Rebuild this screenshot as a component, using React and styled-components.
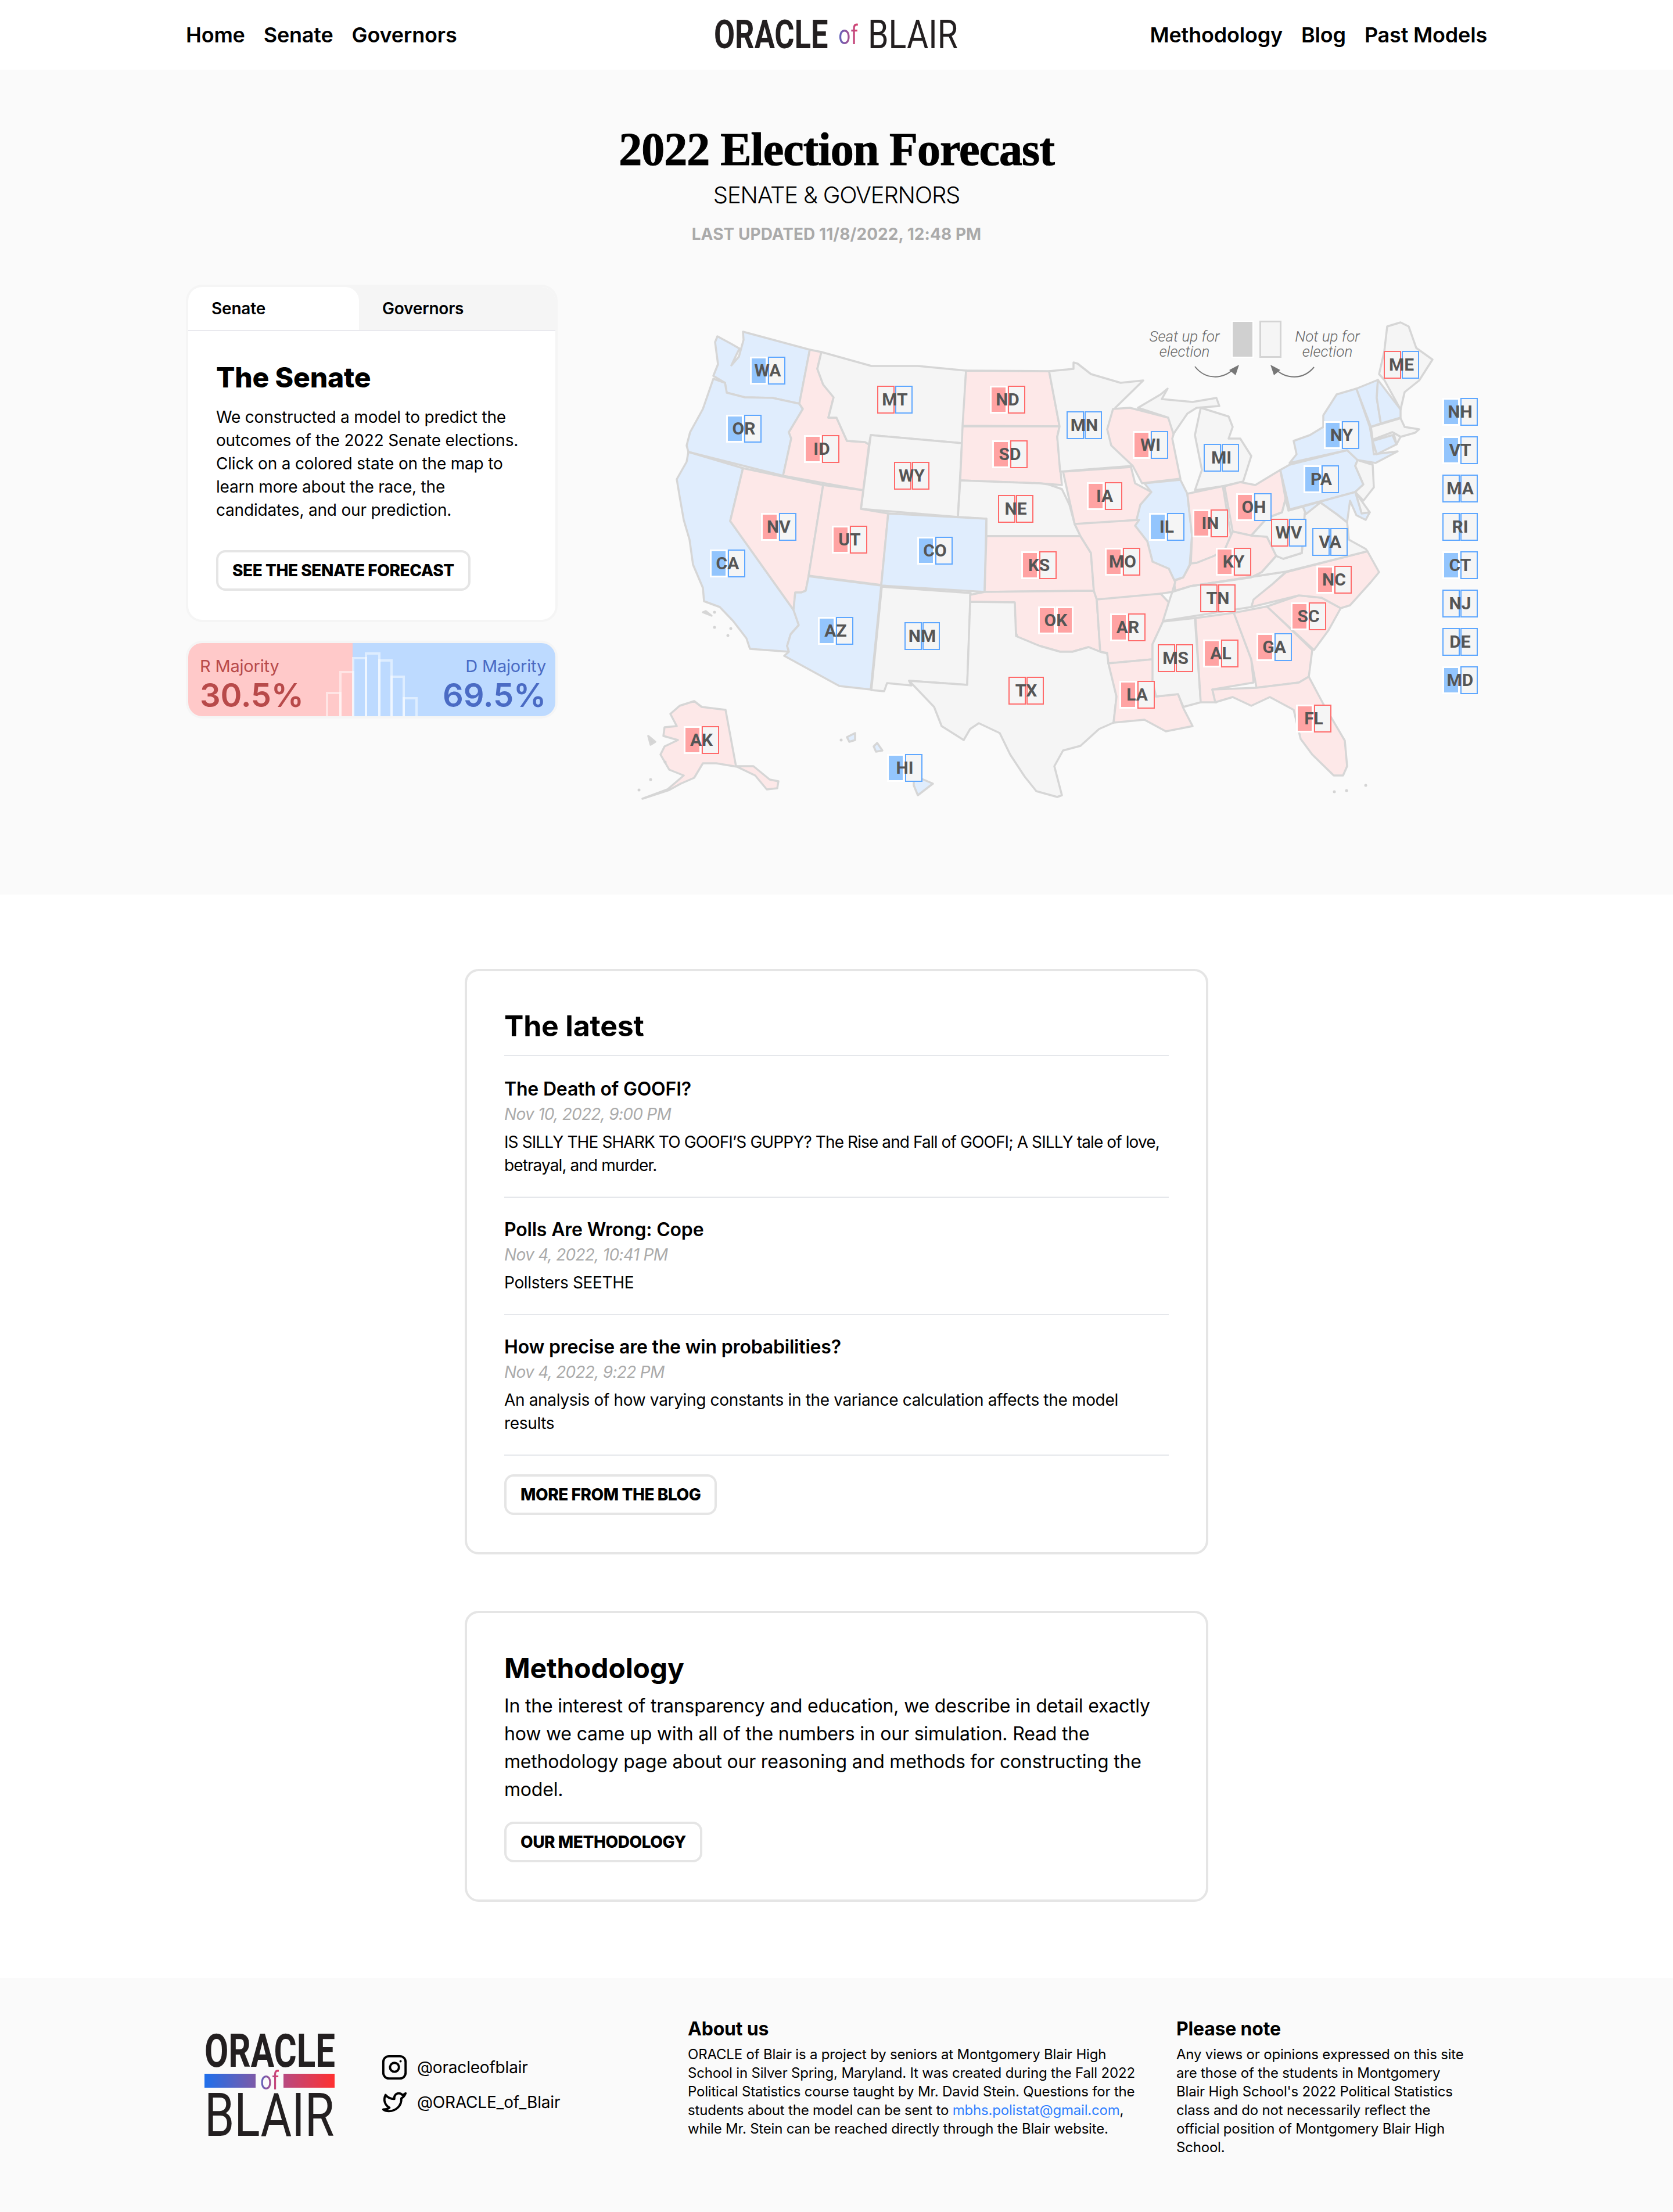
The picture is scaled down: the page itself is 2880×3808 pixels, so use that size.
import styled, { createGlobalStyle } from "styled-components";

const Global = createGlobalStyle`
  * { box-sizing: border-box; }
  body {
    margin: 0;
    background: #fff;
    color: #000;
    font-family: Inter, "Liberation Sans", sans-serif;
    letter-spacing: -0.012em;
  }
`;

const RED = "#fde8e8";
const BLUE = "#e0edfd";
const GRAY = "#f5f5f5";

const STATES = [
  [BLUE, "1279,569 1394,600 1376,693 1330,683 1282,682 1251,674 1248,657 1228,645 1236,625 1231,587 1235,577 1259,590 1273,598 1267,610 1259,627 1272,612 1280,583"],
  [BLUE, "1228,650 1248,657 1251,674 1282,682 1330,683 1376,693 1382,702 1374,720 1358,742 1362,753 1348,817 1185,776 1182,765 1188,742 1210,702"],
  [BLUE, "1185,776 1279,804 1257,895 1366,1048 1375,1074 1361,1090 1355,1110 1358,1120 1291,1115 1285,1097 1262,1067 1239,1043 1212,1033 1210,1010 1193,970 1187,927 1177,893 1170,853 1165,823 1182,793"],
  [RED, "1394,600 1414,604 1407,633 1417,660 1435,682 1426,717 1440,717 1458,757 1489,759 1496,763 1486,842 1348,817 1362,753 1358,742 1382,702 1376,693"],
  [GRAY, "1414,604 1500,628 1580,628 1663,636 1657,761 1499,747 1496,763 1489,759 1458,757 1440,717 1426,717 1435,682 1417,660 1407,633"],
  [GRAY, "1499,747 1656,761 1649,888 1482,874"],
  [RED, "1663,636 1806,637 1824,732 1657,731"],
  [RED, "1657,732 1824,732 1820,750 1828,833 1790,830 1653,825"],
  [GRAY, "1653,825 1790,830 1805,832 1828,840 1841,867 1850,900 1860,921 1698,921 1698,891 1649,888"],
  [RED, "1279,804 1417,833 1392,990 1387,1015 1379,1018 1369,1018 1366,1048 1257,895"],
  [RED, "1417,833 1486,842 1482,874 1529,882 1517,1005 1392,989"],
  [BLUE, "1529,882 1698,891 1695,1017 1517,1006"],
  [BLUE, "1392,990 1517,1006 1499,1185 1445,1179 1350,1127 1358,1120 1355,1110 1361,1090 1375,1074 1366,1048 1369,1018 1379,1018 1387,1015"],
  [GRAY, "1518,1008 1671,1019 1665,1177 1565,1170 1569,1178 1527,1174 1522,1188 1500,1186"],
  [RED, "1698,921 1860,921 1878,950 1883,1015 1695,1017"],
  [RED, "1670,1022 1695,1017 1883,1015 1888,1030 1894,1120 1874,1112 1846,1120 1825,1120 1790,1110 1754,1100 1749,1088 1746,1035 1670,1034"],
  [GRAY, "1670,1034 1747,1035 1749,1093 1790,1110 1825,1120 1846,1120 1874,1112 1894,1120 1906,1123 1909,1140 1922,1197 1917,1242 1892,1253 1860,1282 1830,1290 1815,1317 1828,1367 1820,1370 1784,1360 1764,1335 1739,1297 1721,1260 1685,1243 1670,1253 1659,1272 1621,1248 1608,1215 1565,1170 1665,1177"],
  [GRAY, "1806,637 1848,633 1848,622 1855,624 1878,642 1929,657 1968,653 1920,700 1916,717 1908,737 1913,763 1947,787 1950,800 1860,807 1825,810 1820,750 1824,732"],
  [RED, "1916,702 1945,700 2011,717 2023,737 2018,753 2032,822 1966,830 1950,800 1913,765 1906,737"],
  [GRAY, "1959,700 1998,677 2010,667 2000,685 2053,690 2094,683 2099,697 2060,700 2044,710 2020,745 2011,717"],
  [GRAY, "2067,700 2115,715 2122,733 2115,753 2135,753 2154,783 2140,827 2105,835 2057,842 2069,807 2057,747"],
  [RED, "1830,810 1860,808 1947,802 1954,830 1982,845 1972,867 1961,893 1860,900 1850,900"],
  [BLUE, "1970,830 2032,824 2044,848 2052,920 2048,970 2037,992 2021,997 2012,977 1984,965 1975,930 1954,903 1963,867 1982,845"],
  [RED, "2044,848 2105,835 2119,920 2108,945 2090,955 2060,967 2050,968 2052,920"],
  [RED, "2108,835 2135,828 2161,833 2204,807 2213,857 2207,880 2181,890 2154,920 2122,913"],
  [RED, "2050,968 2060,967 2090,955 2108,945 2122,913 2154,920 2181,922 2197,955 2172,983 2154,992 2050,1007 2023,1015 2021,998 2037,992"],
  [RED, "1850,900 1961,893 1954,903 1975,930 1984,965 2012,977 2023,1000 2018,1017 1998,1020 2000,1035 1888,1030 1883,1015 1878,950 1860,921"],
  [RED, "1888,1030 1998,1020 2012,1035 2005,1063 1984,1107 1984,1133 1908,1140 1906,1122 1894,1120"],
  [RED, "1908,1140 1984,1133 1988,1150 1984,1170 1990,1197 2028,1193 2037,1217 2053,1248 2007,1257 1970,1237 1917,1242 1922,1197"],
  [GRAY, "2002,1068 2057,1062 2067,1207 2037,1215 2028,1193 1990,1197 1984,1170 1984,1107"],
  [RED, "2058,1062 2124,1053 2154,1133 2158,1173 2087,1185 2094,1207 2076,1207 2067,1207"],
  [RED, "2124,1053 2181,1042 2197,1057 2259,1117 2253,1163 2236,1173 2163,1182 2154,1133"],
  [RED, "2087,1185 2163,1182 2236,1173 2253,1163 2278,1210 2315,1273 2319,1317 2312,1333 2296,1333 2259,1297 2239,1270 2227,1220 2186,1198 2154,1213 2122,1198 2092,1207"],
  [RED, "2181,1042 2236,1023 2275,1027 2308,1045 2287,1083 2262,1117 2197,1057"],
  [RED, "2214,983 2354,947 2374,983 2360,1000 2324,1040 2308,1045 2275,1027 2236,1023 2154,1043 2158,1028 2191,1003"],
  [GRAY, "2018,1017 2050,1007 2214,982 2191,1003 2158,1030 2154,1043 2002,1067 2012,1035"],
  [GRAY, "2154,992 2172,983 2197,955 2209,960 2241,950 2246,882 2273,863 2301,883 2319,897 2322,927 2351,943 2354,947 2214,982 2050,1007"],
  [GRAY, "2213,857 2218,877 2243,870 2248,883 2273,863 2246,882 2241,950 2209,960 2197,955 2181,922 2154,920 2181,890 2207,880"],
  [BLUE, "2204,807 2220,798 2319,773 2337,790 2333,800 2347,832 2333,845 2220,875"],
  [BLUE, "2220,795 2232,780 2227,757 2255,747 2278,733 2278,713 2301,677 2335,667 2358,733 2362,755 2365,780 2406,775 2368,795 2337,790 2319,773"],
  [BLUE, "2335,667 2372,652 2370,683 2377,727 2360,733"],
  [BLUE, "2372,652 2411,703 2411,717 2377,727 2370,683"],
  [GRAY, "2374,642 2383,603 2388,560 2411,553 2425,560 2438,597 2466,617 2443,653 2418,673 2411,703 2383,652"],
  [GRAY, "2360,733 2411,718 2418,733 2443,737 2436,743 2411,750 2397,742 2363,755"],
  [BLUE, "2363,757 2397,747 2404,763 2370,780"],
  [GRAY, "2399,743 2411,750 2404,763"],
  [GRAY, "2337,790 2363,798 2365,837 2347,860 2333,845 2347,832 2333,800"],
  [GRAY, "2333,845 2358,880 2344,882"],
  [BLUE, "2243,870 2333,845 2344,882 2358,880 2351,893 2335,885 2324,860 2319,897 2301,883 2273,863 2248,883"],
  [RED, "1195,1205 1208,1215 1249,1220 1267,1317 1297,1317 1325,1340 1340,1343 1338,1355 1320,1357 1300,1333 1269,1318 1233,1312 1210,1312 1195,1337 1172,1347 1152,1358 1106,1373 1149,1357 1177,1333 1152,1323 1137,1297 1144,1283 1167,1272 1142,1265 1144,1250 1165,1248 1154,1227 1170,1213"],
  [BLUE, "1573,1333 1606,1347 1580,1367 1573,1350"],
  [BLUE, "1504,1283 1510,1277 1519,1290 1508,1292"],
  [BLUE, "1458,1267 1472,1260 1472,1272 1462,1275"],
  ["#d4d4d4", "1215,1050 1225,1058 1210,1052"],
  ["#d4d4d4", "1116,1265 1128,1275 1120,1280"],
];

const DOTS = [
  [1230, 1052], [1230, 1078], [1258, 1080], [1253, 1092], [2297, 1361], [2318, 1359], [2351, 1350],
  [1100, 1358], [1120, 1340], [1145, 1310], [1448, 1272],
];

const R = "#ff6b6b";
const B = "#5ea7ff";
const RF = "#ffa3a3";
const BF = "#93c5fd";

// x, y, label, left tile, right tile (a fill colour means a seat up for election)
const rf = ["r", true];
const ro = ["r", false];
const bf = ["b", true];
const bo = ["b", false];
const PINS = [
  [1291, 612, "WA", bf, bo], [1250, 712, "OR", bf, bo], [1510, 662, "MT", ro, bo], [1704, 662, "ND", rf, ro],
  [1384, 747, "ID", rf, ro], [1708, 756, "SD", rf, ro], [1539, 793, "WY", ro, ro], [1718, 850, "NE", ro, ro],
  [1310, 881, "NV", rf, bo], [1432, 903, "UT", rf, ro], [1579, 922, "CO", bf, bo], [1758, 947, "KS", rf, ro],
  [1222, 944, "CA", bf, bo], [1787, 1042, "OK", rf, rf], [1408, 1060, "AZ", bf, bo], [1557, 1069, "NM", bo, bo],
  [1736, 1163, "TX", ro, ro], [1177, 1248, "AK", rf, ro], [1527, 1296, "HI", bf, bo], [2382, 602, "ME", ro, bo],
  [2483, 683, "NH", bf, bo], [2483, 749, "VT", bf, bo], [2483, 815, "MA", bo, bo], [2483, 881, "RI", bo, bo],
  [2483, 947, "CT", bf, bo], [2483, 1013, "NJ", bo, bo], [2483, 1079, "DE", bo, bo], [2483, 1145, "MD", bf, bo],
  [1836, 706, "MN", bo, bo], [1950, 740, "WI", rf, bo], [2279, 723, "NY", bf, bo], [2072, 762, "MI", bo, bo],
  [2244, 799, "PA", bf, bo], [1871, 828, "IA", rf, ro], [2128, 847, "OH", rf, bo], [1978, 881, "IL", bf, bo],
  [2053, 875, "IN", rf, ro], [2188, 891, "WV", ro, bo], [2259, 907, "VA", bo, bo], [1902, 941, "MO", rf, ro],
  [2093, 941, "KY", rf, ro], [2266, 972, "NC", rf, ro], [2066, 1004, "TN", ro, ro], [2222, 1035, "SC", rf, ro],
  [1911, 1054, "AR", rf, ro], [2163, 1088, "GA", rf, bo], [2071, 1099, "AL", rf, ro], [1993, 1107, "MS", ro, ro],
  [1927, 1170, "LA", rf, ro], [2231, 1211, "FL", rf, ro],
];

const POSTS = [
  {
    title: "The Death of GOOFI?",
    date: "Nov 10, 2022, 9:00 PM",
    text: "IS SILLY THE SHARK TO GOOFI’S GUPPY? The Rise and Fall of GOOFI; A SILLY tale of love, betrayal, and murder.",
    tight: true,
  },
  { title: "Polls Are Wrong: Cope", date: "Nov 4, 2022, 10:41 PM", text: "Pollsters SEETHE" },
  {
    title: "How precise are the win probabilities?",
    date: "Nov 4, 2022, 9:22 PM",
    text: "An analysis of how varying constants in the variance calculation affects the model results",
  },
];

const HIST = [[563, 1192], [586, 1156], [608, 1132], [630, 1124], [653, 1136], [674, 1164], [695, 1201]];
const HIST_W = [23, 22, 22, 23, 21, 21, 22];

function Tile({ side }) {
  const [party, up] = side;
  return <TileBox $up={up} $color={party === "r" ? (up ? RF : R) : up ? BF : B} />;
}

function Pin({ x, y, label, left, right }) {
  return (
    <PinBox style={{ left: x - 1060, top: y - 520 }}>
      <Tile side={left} />
      <Tile side={right} />
      <PinLabel>{label}</PinLabel>
    </PinBox>
  );
}

function USMap() {
  return (
    <MapCanvas>
      <MapSvg viewBox="1060 520 1500 880">
        {STATES.map(([fill, points], i) => (
          <polygon key={i} points={points} fill={fill} stroke="#d6d6d6" strokeWidth="3.5" strokeLinejoin="round" />
        ))}
        {DOTS.map(([cx, cy], i) => (
          <circle key={i} cx={cx} cy={cy} r="2.5" fill="#d4d4d4" />
        ))}
        <path d="M2057 629 C2075 652 2105 652 2125 632" fill="none" stroke="#777" strokeWidth="2" />
        <path d="M2133 626 L2116 635 L2127 644 Z" fill="#777" />
        <path d="M2262 630 C2244 652 2214 652 2194 632" fill="none" stroke="#777" strokeWidth="2" />
        <path d="M2187 626 L2204 635 L2193 644 Z" fill="#777" />
      </MapSvg>
      <LegendText $center={2039}>Seat up for<br />election</LegendText>
      <LegendText $center={2285}>Not up for<br />election</LegendText>
      <LegendFilled />
      <LegendEmpty />
      {PINS.map(([x, y, label, left, right]) => (
        <Pin key={label} x={x} y={y} label={label} left={left} right={right} />
      ))}
    </MapCanvas>
  );
}

function Histogram() {
  return (
    <HistSvg viewBox="324 1106 632 126">
      {HIST.map(([x, y], i) => (
        <rect key={x} x={x} y={y} width={HIST_W[i]} height={1240 - y} fill="none" stroke="rgba(255,255,255,0.5)" strokeWidth="4" />
      ))}
    </HistSvg>
  );
}

function App() {
  return (
    <>
      <Global />
      <Nav>
        <NavLinks>
          <NavLink>Home</NavLink>
          <NavLink>Senate</NavLink>
          <NavLink>Governors</NavLink>
        </NavLinks>
        <NavLogo>
          <LogoWord $size={68} $weight={700} $width={198} $scale={0.77}>ORACLE</LogoWord>
          <LogoOf $size={46}>of</LogoOf>
          <LogoWord $size={68} $weight={400} $width={157} $scale={0.84}>BLAIR</LogoWord>
        </NavLogo>
        <NavLinks>
          <NavLink>Methodology</NavLink>
          <NavLink>Blog</NavLink>
          <NavLink>Past Models</NavLink>
        </NavLinks>
      </Nav>

      <Hero>
        <Title>2022 Election Forecast</Title>
        <Subtitle>SENATE &amp; GOVERNORS</Subtitle>
        <Updated>LAST UPDATED 11/8/2022, 12:48 PM</Updated>
        <HeroBody>
          <SideColumn>
            <TabCard>
              <Tabs>
                <Tab $active>Senate</Tab>
                <Tab>Governors</Tab>
              </Tabs>
              <TabBody>
                <TabHeading>The Senate</TabHeading>
                <TabText>
                  We constructed a model to predict the outcomes of the 2022 Senate elections. Click on a colored state
                  on the map to learn more about the race, the candidates, and our prediction.
                </TabText>
                <Button>SEE THE SENATE FORECAST</Button>
              </TabBody>
            </TabCard>
            <MajorityBar>
              <MajoritySide $bg="#ffc9c9" $color="#b84a4a" $width={283}>
                <MajorityLabel>R Majority</MajorityLabel>
                <MajorityValue>30.5%</MajorityValue>
              </MajoritySide>
              <MajoritySide $bg="#bddaff" $color="#4a6bc4" $right>
                <MajorityLabel>D Majority</MajorityLabel>
                <MajorityValue>69.5%</MajorityValue>
              </MajoritySide>
              <Histogram />
            </MajorityBar>
          </SideColumn>
          <USMap />
        </HeroBody>
      </Hero>

      <Main>
        <Card>
          <CardTitle>The latest</CardTitle>
          {POSTS.map((post) => (
            <Post key={post.title}>
              <PostTitle>{post.title}</PostTitle>
              <PostDate>{post.date}</PostDate>
              <PostText $tight={post.tight}>{post.text}</PostText>
            </Post>
          ))}
          <Button>MORE FROM THE BLOG</Button>
        </Card>
        <Card $method>
          <MethodTitle>Methodology</MethodTitle>
          <MethodText>
            In the interest of transparency and education, we describe in detail exactly how we came up with all of the
            numbers in our simulation. Read the methodology page about our reasoning and methods for constructing the
            model.
          </MethodText>
          <Button>OUR METHODOLOGY</Button>
        </Card>
      </Main>

      <Footer>
        <FooterLogo>
          <LogoWord $size={80} $lead={56} $weight={700} $width={223} $scale={0.75}>ORACLE</LogoWord>
          <LogoBars>
            <LogoBar $from="#1f6feb" $to="#7c5aa8" />
            <LogoOf $size={44}>of</LogoOf>
            <LogoBar $from="#b84a80" $to="#ff3030" />
          </LogoBars>
          <LogoWord $size={103} $lead={73} $weight={400} $width={223} $scale={0.8}>BLAIR</LogoWord>
        </FooterLogo>
        <Socials>
          <Social>
            <SocialIcon viewBox="0 0 24 24">
              <rect x="2" y="2" width="20" height="20" rx="5" ry="5" />
              <path d="M16 11.37A4 4 0 1 1 12.63 8 4 4 0 0 1 16 11.37z" />
              <line x1="17.5" y1="6.5" x2="17.51" y2="6.5" />
            </SocialIcon>
            @oracleofblair
          </Social>
          <Social>
            <SocialIcon viewBox="0 0 24 24">
              <path d="M22 4s-1 2.9-3.8 4.6C18.5 15 13.6 20 7 20c-1.9 0-3.7-.5-5-1.5 2 .1 4-.5 5.5-1.6C3 14.5 2 9.5 4 5.5c2 2.4 4.8 3.6 7.9 3.5-.4-2.6 1.3-5 4.1-5 1.2 0 2.3.6 3 1.4C20 5.5 22 4 22 4z" />
            </SocialIcon>
            @ORACLE_of_Blair
          </Social>
        </Socials>
        <FooterColumn $width={841}>
          <FooterHeading>About us</FooterHeading>
          <FooterText>
            ORACLE of Blair is a project by seniors at Montgomery Blair High School in Silver Spring, Maryland. It was
            created during the Fall 2022 Political Statistics course taught by Mr. David Stein. Questions for the
            students about the model can be sent to <MailLink>mbhs.polistat@gmail.com</MailLink>, while Mr. Stein can be
            reached directly through the Blair website.
          </FooterText>
        </FooterColumn>
        <FooterColumn $width={540}>
          <FooterHeading>Please note</FooterHeading>
          <FooterText>
            Any views or opinions expressed on this site are those of the students in Montgomery Blair High School's
            2022 Political Statistics class and do not necessarily reflect the official position of Montgomery Blair
            High School.
          </FooterText>
        </FooterColumn>
      </Footer>
    </>
  );
}

const Nav = styled.nav`
  height: 120px;
  padding: 0 320px;
  display: grid;
  grid-template-columns: 1fr auto 1fr;
  align-items: center;
  background: #fff;
  & > div:last-child {
    justify-content: flex-end;
  }
`;

const NavLinks = styled.div`
  display: flex;
  gap: 32px;
`;

const NavLink = styled.a`
  font-size: 36px;
  line-height: 48px;
  font-weight: 600;
  color: #000;
`;

const NavLogo = styled.div`
  display: flex;
  align-items: center;
  gap: 12px;
  height: 48px;
`;

const LogoWord = styled.span`
  display: block;
  flex: none;
  width: ${(p) => p.$width}px;
  font-family: Roboto, "Liberation Sans", sans-serif;
  font-size: ${(p) => p.$size}px;
  font-weight: ${(p) => p.$weight};
  line-height: ${(p) => (p.$lead ? `${p.$lead}px` : 1)};
  letter-spacing: 0;
  color: #231f20;
  white-space: nowrap;
  transform: scaleX(${(p) => p.$scale});
  transform-origin: left center;
`;

const LogoOf = styled.span`
  font-family: Roboto, "Liberation Sans", sans-serif;
  font-size: ${(p) => p.$size}px;
  font-weight: 400;
  line-height: 1;
  letter-spacing: 0;
  background: linear-gradient(90deg, #5a63c0, #e0406a);
  -webkit-background-clip: text;
  background-clip: text;
  color: transparent;
  display: inline-block;
  transform: scaleX(0.8);
`;

const Hero = styled.section`
  height: 1420px;
  padding-top: 91px;
  background: #fafafa;
`;

const Title = styled.h1`
  margin: 0;
  text-align: center;
  font-family: "Liberation Serif", serif;
  font-size: 80px;
  line-height: 92px;
  font-weight: 700;
  letter-spacing: -1px;
  -webkit-text-stroke: 1px #000;
  color: #000;
`;

const Subtitle = styled.div`
  margin-top: 7px;
  text-align: center;
  font-size: 40px;
  line-height: 52px;
  font-weight: 300;
  letter-spacing: -0.03em;
`;

const Updated = styled.div`
  margin-top: 21px;
  text-align: center;
  font-size: 28px;
  line-height: 40px;
  font-weight: 700;
  letter-spacing: 0.002em;
  color: #aaa;
`;

const HeroBody = styled.div`
  margin-top: 71px;
  padding: 0 320px 0 324px;
  display: flex;
  justify-content: space-between;
  align-items: flex-start;
`;

const SideColumn = styled.div`
  width: 632px;
  flex: none;
`;

const TabCard = styled.div`
  background: #fff;
  border-radius: 24px;
  box-shadow: 0 0 0 4px #f5f5f5;
  overflow: hidden;
`;

const Tabs = styled.div`
  display: flex;
  height: 76px;
  background: #f5f5f5;
  border-bottom: 2px solid #e9e9ee;
`;

const Tab = styled.div`
  width: ${(p) => (p.$active ? "294px" : "auto")};
  flex: ${(p) => (p.$active ? "none" : 1)};
  padding: 0 40px;
  font-size: 28px;
  line-height: 74px;
  font-weight: 600;
  background: ${(p) => (p.$active ? "#fff" : "transparent")};
  border-radius: ${(p) => (p.$active ? "24px 24px 0 0" : "0")};
`;

const TabBody = styled.div`
  padding: 48px 48px 50px;
`;

const TabHeading = styled.h2`
  margin: 0 0 16px;
  font-size: 48px;
  line-height: 64px;
  font-weight: 800;
`;

const TabText = styled.p`
  margin: 0 0 49px;
  font-size: 28px;
  line-height: 40px;
`;

const Button = styled.a`
  display: inline-block;
  height: 70px;
  padding: 0 24px;
  border: 4px solid #e5e5e5;
  border-radius: 16px;
  background: #fff;
  font-size: 28px;
  line-height: 62px;
  font-weight: 800;
  letter-spacing: -0.016em;
  color: #000;
`;

const MajorityBar = styled.div`
  position: relative;
  display: flex;
  margin-top: 40px;
  height: 126px;
  border-radius: 24px;
  overflow: hidden;
  box-shadow: 0 0 0 4px #f5f5f5;
`;

const MajoritySide = styled.div`
  width: ${(p) => (p.$width ? `${p.$width}px` : "auto")};
  flex: ${(p) => (p.$width ? "none" : 1)};
  padding: ${(p) => (p.$right ? "20px 16px 0 0" : "20px 0 0 20px")};
  background: ${(p) => p.$bg};
  color: ${(p) => p.$color};
  text-align: ${(p) => (p.$right ? "right" : "left")};
`;

const MajorityLabel = styled.div`
  font-size: 29px;
  line-height: 40px;
`;

const MajorityValue = styled.div`
  font-size: 56px;
  line-height: 60px;
  font-weight: 600;
`;

const HistSvg = styled.svg`
  position: absolute;
  inset: 0;
  width: 632px;
  height: 126px;
`;

const MapCanvas = styled.div`
  position: relative;
  flex: none;
  width: 1500px;
  height: 880px;
  margin-top: 28px;
`;

const MapSvg = styled.svg`
  position: absolute;
  inset: 0;
  width: 1500px;
  height: 880px;
`;

const PinBox = styled.div`
  position: absolute;
  display: flex;
  gap: 1px;
  width: 61px;
  height: 48px;
`;

const TileBox = styled.div`
  width: 30px;
  height: 48px;
  background: ${(p) => (p.$up ? p.$color : "#f5f5f5")};
  border: ${(p) => (p.$up ? "3px solid #fff" : `2px solid ${p.$color}`)};
`;

const PinLabel = styled.span`
  position: absolute;
  inset: 0;
  text-align: center;
  font-family: Roboto, "Liberation Sans", sans-serif;
  font-size: 30px;
  line-height: 48px;
  font-weight: 700;
  letter-spacing: 0;
  color: #555;
`;

const LegendText = styled.div`
  position: absolute;
  top: 44px;
  left: ${(p) => p.$center - 1060 - 100}px;
  width: 200px;
  text-align: center;
  font-family: Roboto, "Liberation Sans", sans-serif;
  font-size: 26px;
  line-height: 26px;
  font-style: italic;
  font-weight: 300;
  letter-spacing: 0;
  color: #666;
`;

const LegendFilled = styled.div`
  position: absolute;
  left: 1060px;
  top: 30px;
  width: 38px;
  height: 64px;
  background: #d0d0d0;
  border: 2px solid #fff;
`;

const LegendEmpty = styled.div`
  position: absolute;
  left: 1108px;
  top: 30px;
  width: 38px;
  height: 64px;
  background: #f5f5f5;
  border: 3px solid #d4d4d4;
`;

const Main = styled.main`
  display: flex;
  flex-direction: column;
  align-items: center;
  gap: 97px;
  padding: 128px 0 131px;
  background: #fff;
`;

const Card = styled.section`
  width: 1280px;
  padding: ${(p) => (p.$method ? "65px 64px 64px" : "62px 64px 64px")};
  border: 4px solid #e5e5e5;
  border-radius: 24px;
  background: #fff;
`;

const CardTitle = styled.h2`
  margin: 0 0 2px;
  padding-bottom: 18px;
  border-bottom: 2px solid #e5e7eb;
  font-size: 50px;
  line-height: 64px;
  font-weight: 700;
`;

const Post = styled.article`
  padding: 35px 0 34px;
  border-bottom: 2px solid #e5e7eb;
  margin-bottom: 0;
  &:last-of-type {
    margin-bottom: 32px;
  }
`;

const PostTitle = styled.h3`
  margin: 0;
  font-size: 32px;
  line-height: 40px;
  font-weight: 600;
`;

const PostDate = styled.div`
  margin-top: 3px;
  font-size: 28px;
  line-height: 40px;
  font-style: italic;
  letter-spacing: -0.025em;
  color: #aaa;
`;

const PostText = styled.p`
  margin: 8px 0 0;
  font-size: 28px;
  line-height: 40px;
  letter-spacing: ${(p) => (p.$tight ? "-0.032em" : "-0.012em")};
`;

const MethodTitle = styled.h2`
  margin: 0;
  font-size: 48px;
  line-height: 60px;
  font-weight: 700;
`;

const MethodText = styled.p`
  margin: 11px 0 31px;
  font-size: 32px;
  line-height: 48px;
`;

const Footer = styled.footer`
  display: flex;
  align-items: flex-start;
  height: 404px;
  padding: 68px 0 0 352px;
  background: #fafafa;
`;

const FooterLogo = styled.div`
  flex: none;
  width: 304px;
  padding-top: 30px;
`;

const LogoBars = styled.div`
  display: flex;
  align-items: center;
  justify-content: space-between;
  width: 224px;
  height: 46px;
`;

const LogoBar = styled.div`
  width: 88px;
  height: 24px;
  background: linear-gradient(90deg, ${(p) => p.$from}, ${(p) => p.$to});
`;

const Socials = styled.div`
  flex: none;
  width: 528px;
  padding-top: 64px;
  display: flex;
  flex-direction: column;
  gap: 16px;
`;

const Social = styled.div`
  display: flex;
  align-items: center;
  gap: 16px;
  height: 44px;
  font-size: 28px;
`;

const SocialIcon = styled.svg`
  flex: none;
  width: 46px;
  height: 46px;
  fill: none;
  stroke: #000;
  stroke-width: 2;
  stroke-linecap: round;
  stroke-linejoin: round;
`;

const FooterColumn = styled.div`
  flex: none;
  width: ${(p) => p.$width}px;
  padding-right: 40px;
`;

const FooterHeading = styled.h4`
  margin: 0 0 8px;
  font-size: 32px;
  line-height: 40px;
  font-weight: 700;
`;

const FooterText = styled.p`
  margin: 0;
  font-size: 24px;
  line-height: 32px;
`;

const MailLink = styled.a`
  color: #2f7fff;
`;

export default App;
